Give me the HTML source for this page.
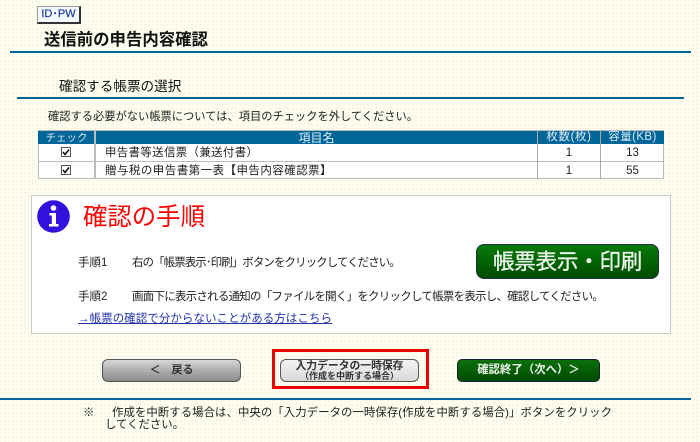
<!DOCTYPE html>
<html lang="ja"><head><meta charset="utf-8"><style>
html,body{margin:0;padding:0}
body{width:700px;height:442px;position:relative;overflow:hidden;background:#fefef4;font-family:"Liberation Sans","Noto Sans CJK JP",sans-serif;color:#222}
#w{position:absolute;left:0;top:0;width:700px;height:442px;background-color:#fefef4;background-image:linear-gradient(#f8f8e4 1px,transparent 1px),linear-gradient(90deg,#f8f8e4 1px,transparent 1px);background-size:4px 4px;filter:blur(.3px)}
.a{position:absolute;white-space:nowrap;line-height:1}
.l{position:absolute;background:#006699}
.c{position:absolute;font-size:11.5px;line-height:1;text-align:center;white-space:nowrap}
.btn{position:absolute;box-sizing:border-box;text-align:center;font-weight:bold;white-space:nowrap}
.cb{position:absolute;width:10px;height:10px;background:#fff;border:1px solid #555;box-sizing:border-box}
</style></head><body><div id="w">
<div class="a" style="left:37px;top:6px;width:44px;height:18px;box-sizing:border-box;background:#f4f8ff;border:1px solid #999;border-right:2px solid #333;border-bottom:2px solid #333;font-size:11px;line-height:15px;text-align:center;color:#1a3c9c;-webkit-text-stroke:.2px #1a3c9c">ID･PW</div>
<div class="a" style="left:44px;top:32px;font-size:16.4px;font-weight:bold;color:#111">送信前の申告内容確認</div>
<div class="l" style="left:10px;top:51px;width:681px;height:2px"></div>
<div class="a" style="left:59px;top:80px;font-size:13.6px;color:#111">確認する帳票の選択</div>
<div class="l" style="left:17px;top:97px;width:667px;height:2px"></div>
<div class="a" style="left:48px;top:112px;font-size:11.25px">確認する必要がない帳票については、項目のチェックを外してください。</div>

<div style="position:absolute;left:38px;top:130px;width:626px;height:49px;box-sizing:border-box;background:#fff;border:1px solid #bbb"></div>
<div style="position:absolute;left:38px;top:131px;width:626px;height:13px;background:#006699"></div>
<div style="position:absolute;left:39px;top:161px;width:624px;height:1px;background:#bbb"></div>
<div style="position:absolute;left:94px;top:130px;width:2px;height:49px;background:#bbb"></div>
<div style="position:absolute;left:537px;top:130px;width:1px;height:49px;background:#aaa"></div>
<div style="position:absolute;left:600px;top:130px;width:1px;height:49px;background:#aaa"></div>
<div class="c" style="left:38px;top:133px;width:57px;color:#dfeaf2;font-size:10.5px">チェック</div>
<div class="c" style="left:96px;top:132px;width:441px;color:#dfeaf2;font-size:12px">項目名</div>
<div class="c" style="left:538px;top:132px;width:62px;color:#dfeaf2;letter-spacing:.6px">枚数(枚)</div>
<div class="c" style="left:601px;top:132px;width:63px;color:#dfeaf2;letter-spacing:.4px">容量(KB)</div>

<div class="cb" style="left:61px;top:147px"></div>
<svg style="position:absolute;left:61px;top:147px" width="10" height="10"><path d="M2 5 L4 7.5 L8 2.5" fill="none" stroke="#111" stroke-width="1.6"/></svg>
<div class="cb" style="left:61px;top:165px"></div>
<svg style="position:absolute;left:61px;top:165px" width="10" height="10"><path d="M2 5 L4 7.5 L8 2.5" fill="none" stroke="#111" stroke-width="1.6"/></svg>
<div class="a" style="left:105px;top:148px;font-size:11.4px;letter-spacing:.4px">申告書等送信票（兼送付書）</div>
<div class="a" style="left:105px;top:166px;font-size:11.5px;letter-spacing:.45px">贈与税の申告書第一表【申告内容確認票】</div>
<div class="c" style="left:538px;top:148px;width:62px">1</div>
<div class="c" style="left:601px;top:148px;width:63px">13</div>
<div class="c" style="left:538px;top:166px;width:62px">1</div>
<div class="c" style="left:601px;top:166px;width:63px">55</div>

<div style="position:absolute;left:31px;top:195px;width:640px;height:139px;box-sizing:border-box;background:#fff;border:1px solid #ccc"></div>
<svg style="position:absolute;left:37px;top:200px" width="33" height="33" viewBox="0 0 33 33"><circle cx="16.5" cy="16.5" r="16.3" fill="#3311dd"/><circle cx="16.5" cy="8" r="2.8" fill="#fff"/><path d="M12.5 13 H19 V24 H21.5 V26.5 H12 V24 H14.8 V15.5 H12.5 Z" fill="#fff"/></svg>
<div class="a" style="left:83px;top:206px;font-size:24.4px;color:#ff0000">確認の手順</div>
<div class="a" style="left:78px;top:258px;font-size:11.5px">手順1</div>
<div class="a" style="left:132px;top:258px;font-size:11.5px;letter-spacing:-.95px">右の「帳票表示･印刷」ボタンをクリックしてください。</div>
<div class="a" style="left:78px;top:292px;font-size:11.5px">手順2</div>
<div class="a" style="left:132px;top:292px;font-size:11.5px;letter-spacing:-.77px">画面下に表示される通知の「ファイルを開く」をクリックして帳票を表示し、確認してください。</div>
<div class="a" style="left:78px;top:314px;font-size:11.55px;color:#2233aa;text-decoration:underline">→帳票の確認で分からないことがある方はこちら</div>

<div class="btn" style="left:476px;top:244px;width:183px;height:35px;border-radius:8px;border:1px solid #234;background:linear-gradient(#0a7a0a,#005f00 60%,#004a00);color:#eef5ee;font-size:21.5px;line-height:35px;font-weight:normal;letter-spacing:-.2px;-webkit-text-stroke:.35px #eef5ee">帳票表示・印刷</div>

<div class="btn" style="left:102px;top:359px;width:139px;height:23px;border-radius:6px;border:1px solid #555;background:linear-gradient(#d8d8d8,#aaa 55%,#8c8c8c);color:#333;font-size:11px;line-height:21px">＜　戻る</div>
<div style="position:absolute;left:272px;top:349px;width:157px;height:40px;box-sizing:border-box;border:3px solid #ee0000"></div>
<div class="btn" style="left:280px;top:359px;width:139px;height:23px;border-radius:6px;border:1px solid #555;background:linear-gradient(#f4f4f4,#d8d8d8);color:#333;font-size:10.8px;line-height:10px;padding-top:1px">入力データの一時保存<br><span style="font-size:9px">（作成を中断する場合）</span></div>
<div class="btn" style="left:457px;top:359px;width:143px;height:23px;border-radius:5px;border:1px solid #123;background:linear-gradient(#0a7008,#004a00);color:#eef5ee;font-size:11.4px;line-height:21px">確認終了（次へ）＞</div>

<div class="l" style="left:0;top:398px;width:691px;height:2px"></div>
<div class="a" style="left:83px;top:408px;font-size:11.4px">※</div>
<div class="a" style="left:112px;top:408px;font-size:11.4px;letter-spacing:.06px">作成を中断する場合は、中央の「入力データの一時保存(作成を中断する場合)」ボタンをクリック</div>
<div class="a" style="left:105px;top:420px;font-size:11.4px">してください。</div>
</div></body></html>
